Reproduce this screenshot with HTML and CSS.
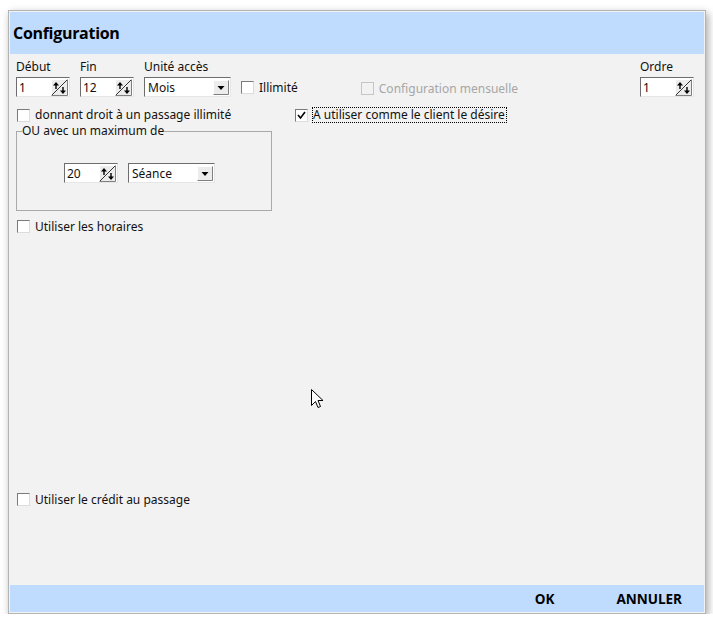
FILE: index.html
```html
<!DOCTYPE html>
<html lang="fr">
<head>
  <meta charset="UTF-8">
  <title>Configuration</title>
  <link rel="stylesheet" href="styles.css">
</head>
<body>

<div class="dialog">
  <header class="dlg-header">Configuration</header>

  <section class="dlg-body">
    <div class="row top-row">
      <div class="field">
        <label>Début</label>
        <div class="spin"><span class="spin-val">1</span><span class="spin-btn"></span></div>
      </div>
      <div class="field">
        <label>Fin</label>
        <div class="spin"><span class="spin-val">12</span><span class="spin-btn"></span></div>
      </div>
      <div class="field">
        <label>Unité accès</label>
        <div class="combo"><span class="combo-val">Mois</span><span class="combo-btn"></span></div>
      </div>
      <div class="check illimite"><span class="box"></span><span>Illimité</span></div>
      <div class="check disabled mensuelle"><span class="box"></span><span>Configuration mensuelle</span></div>
      <div class="field ordre">
        <label>Ordre</label>
        <div class="spin"><span class="spin-val">1</span><span class="spin-btn"></span></div>
      </div>
    </div>

    <div class="row second-row">
      <div class="check passage"><span class="box"></span><span>donnant droit à un passage illimité</span></div>
      <div class="check checked client"><span class="box"><svg width="9" height="9" viewBox="0 0 9 9"><polyline points="1,4 3.5,7 8,1" fill="none" stroke="#000" stroke-width="1.6"/></svg></span><span class="focus">A utiliser comme le client le désire</span></div>
    </div>

    <fieldset class="group">
      <legend>OU avec un maximum de</legend>
      <div class="group-inner">
        <div class="spin"><span class="spin-val">20</span><span class="spin-btn"></span></div>
        <div class="combo"><span class="combo-val">Séance</span><span class="combo-btn"></span></div>
      </div>
    </fieldset>

    <div class="check horaires"><span class="box"></span><span>Utiliser les horaires</span></div>

    <div class="check credit"><span class="box"></span><span>Utiliser le crédit au passage</span></div>

    <svg class="cursor" width="13" height="21" viewBox="0 0 13 21">
      <path d="M0.5 0.5 L0.5 16.5 L4.5 12.5 L7 18.5 L9.5 17.5 L7 11.5 L12 11.5 Z" fill="#fff" stroke="#000" stroke-width="1"/>
    </svg>
  </section>

  <footer class="dlg-footer">
    <span class="btn">OK</span>
    <span class="btn">ANNULER</span>
  </footer>
</div>

</body>
</html>
```

FILE: styles.css
```css
body {
  margin: 0;
  background: #fff;
  font-family: "Noto Sans", "Open Sans", sans-serif;
  font-size: 12px;
  color: #111;
}
.dialog {
  margin: 10px 0 0 8px;
  width: 694px;
  height: 600px;
  border: 1px solid #b4b4b4;
  background: #f2f2f2;
  box-shadow: 2px 3px 8px rgba(0,0,0,0.35);
  display: flex;
  flex-direction: column;
  padding: 1px;
  box-sizing: content-box;
}
.dlg-header {
  height: 42px;
  background: #bfdbfe;
  font-family: "Open Sans", sans-serif;
  font-weight: bold;
  font-size: 16px;
  letter-spacing: -0.3px;
  display: flex;
  align-items: center;
  padding-left: 3px;
  color: #000;
}
.dlg-body {
  flex: 1;
  position: relative;
  padding: 5px 10px 0 6px;
}
.dlg-footer {
  height: 27px;
  background: #bfdbfe;
  display: flex;
  justify-content: flex-end;
  align-items: center;
  gap: 62px;
  padding-right: 22px;
  font-family: "Open Sans", sans-serif;
  font-weight: bold;
  font-size: 13.5px;
  color: #000;
}
.row {
  display: flex;
}
.top-row {
  align-items: flex-start;
}
.field {
  display: flex;
  flex-direction: column;
  margin-right: 10px;
}
.field label {
  height: 18px;
  line-height: 16px;
}
.ordre {
  margin-left: auto;
  margin-right: 0;
}
.spin, .combo {
  height: 18px;
  background: #fff;
  border: 1px solid;
  border-color: #6d6d6d #e6e6e6 #e6e6e6 #6d6d6d;
  display: flex;
  align-items: center;
}
.spin {
  width: 52px;
}
.combo {
  width: 85px;
}
.spin-val, .combo-val {
  flex: 1;
  padding-left: 2px;
}
.combo-val {
  padding-left: 3px;
}
.spin-btn {
  width: 17px;
  height: 17px;
  margin-right: 1px;
  background: #ececec url("data:image/svg+xml,%3Csvg xmlns='http://www.w3.org/2000/svg' width='17' height='17'%3E%3Cpath d='M0.5 16.5 L0.5 0.5 L16.5 0.5' fill='none' stroke='%23fff'/%3E%3Cpath d='M0.5 16.5 L16.5 16.5 L16.5 0.5' fill='none' stroke='%23808080'/%3E%3Cline x1='1' y1='16' x2='16' y2='1' stroke='%23333' stroke-width='1'/%3E%3Cpath d='M5 3 L2 6.5 L4.3 6.5 L4.3 10 L5.7 10 L5.7 6.5 L8 6.5 Z' fill='%23000'/%3E%3Cpath d='M12 15 L9 11.5 L11.3 11.5 L11.3 8 L12.7 8 L12.7 11.5 L15 11.5 Z' fill='%23000'/%3E%3C/svg%3E") no-repeat;
}
.combo-btn {
  width: 16px;
  height: 15px;
  margin-right: 1px;
  background: #ececec url("data:image/svg+xml,%3Csvg xmlns='http://www.w3.org/2000/svg' width='16' height='15'%3E%3Cpath d='M0.5 14.5 L0.5 0.5 L15.5 0.5' fill='none' stroke='%23fff'/%3E%3Cpath d='M0.5 14.5 L15.5 14.5 L15.5 0.5' fill='none' stroke='%23808080'/%3E%3Cpath d='M4.5 6 L11.5 6 L8 10 Z' fill='%23000'/%3E%3C/svg%3E") no-repeat;
}
.check {
  display: flex;
  align-items: center;
  gap: 5px;
  height: 15px;
  line-height: 14px;
}
.box {
  width: 11px;
  height: 11px;
  flex: none;
  background: #fff;
  border: 1px solid;
  border-color: #7a7a7a #dcdcdc #dcdcdc #7a7a7a;
  display: flex;
  align-items: center;
  justify-content: center;
}
.illimite {
  margin-top: 21px;
}
.mensuelle {
  margin-top: 22px;
  margin-left: 63px;
  color: #a6a6a6;
}
.disabled .box {
  background: #f2f2f2;
  border-color: #c6c6c6;
}
.second-row {
  margin-top: 10px;
  height: 16px;
  align-items: center;
}
.passage {
  margin-left: 1px;
  width: 278px;
}
.client {
  gap: 4px;
}
.focus {
  border: 1px dotted #000;
  padding: 0 1px 1px 0;
  line-height: 13px;
}
.group {
  margin: 2px 0 0 0;
  width: 256px;
  height: 86px;
  border: 1px solid #a9a9a9;
  padding: 0;
  box-sizing: border-box;
}
.group legend {
  padding: 0;
  margin-left: 5px;
  line-height: 12px;
}
.group-inner {
  display: flex;
  gap: 10px;
  padding: 26px 0 0 47px;
}
.horaires {
  margin: 8px 0 0 1px;
}
.credit {
  margin: 258px 0 0 1px;
}
.cursor {
  position: absolute;
  left: 301px;
  top: 335px;
}
```
